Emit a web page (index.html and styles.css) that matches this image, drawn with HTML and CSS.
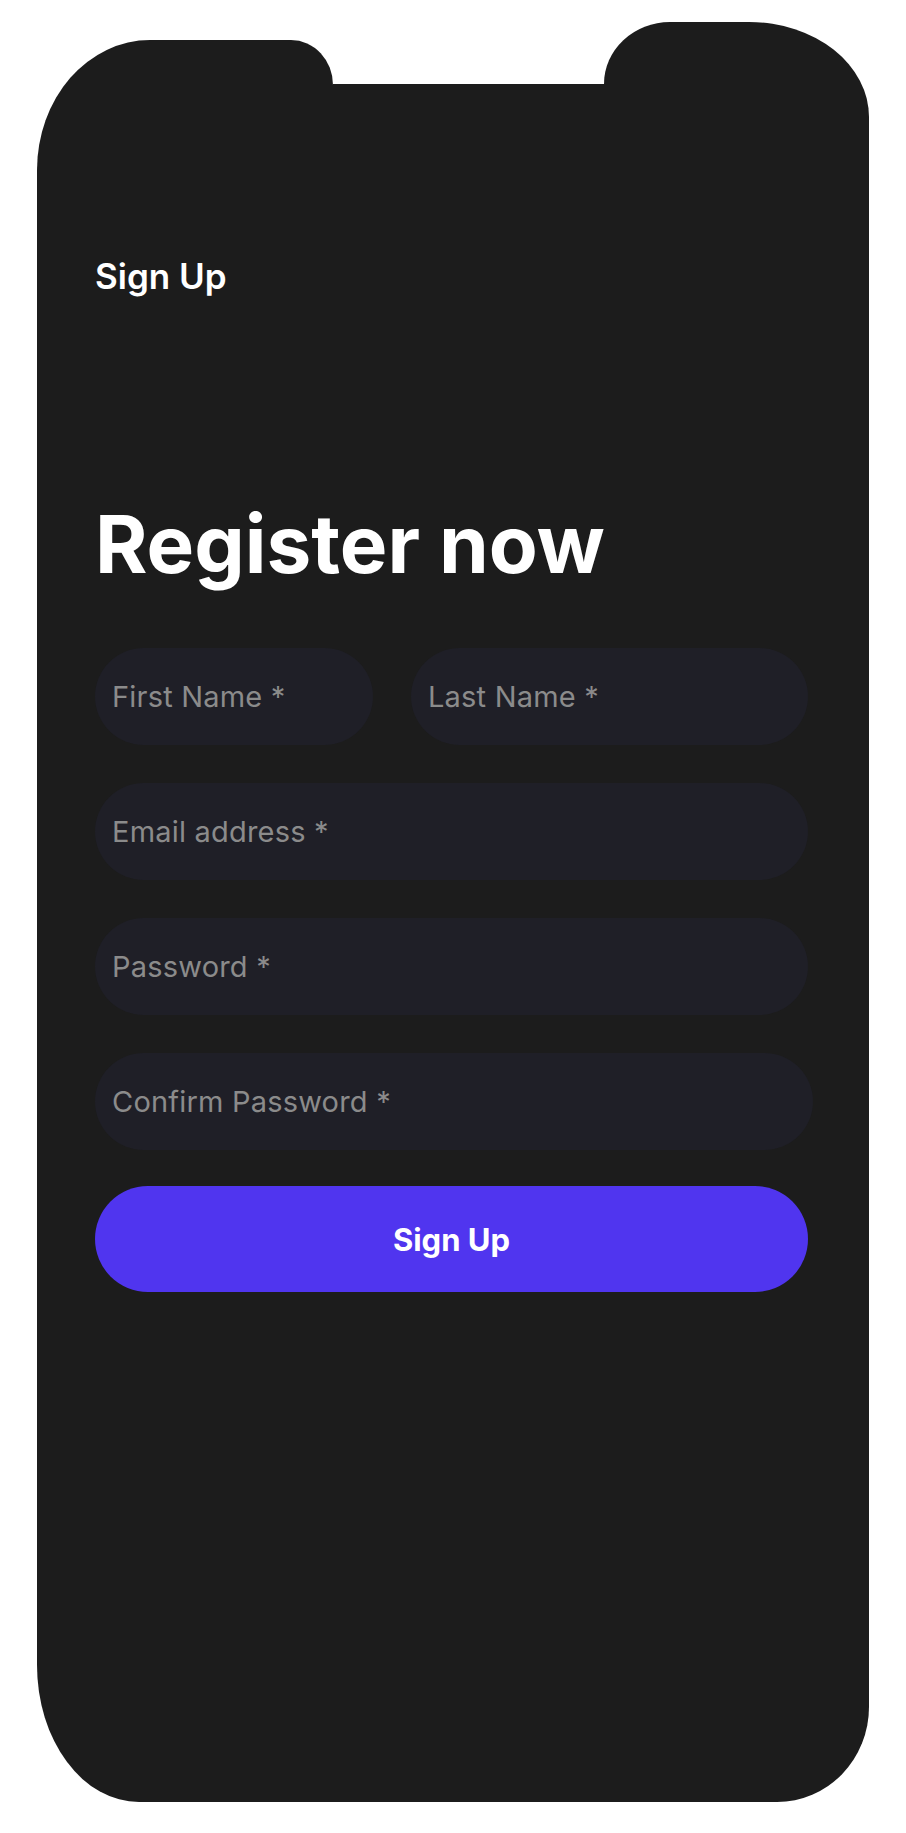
FILE: index.html
```html
<!DOCTYPE html>
<html lang="en">
<head>
<meta charset="utf-8">
<title>Sign Up</title>
<link rel="stylesheet" href="styles.css">
</head>
<body>
<div class="phone">
  <div class="cap-top">
    <div class="lobe lobe-left"></div>
    <div class="lobe lobe-mid"></div>
    <div class="lobe lobe-right"></div>
  </div>
  <main class="screen">
    <header class="topbar">Sign Up</header>
    <h1 class="title">Register now</h1>
    <form class="form">
      <div class="row">
        <input class="field field-first" type="text" placeholder="First Name *">
        <input class="field field-last" type="text" placeholder="Last Name *">
      </div>
      <input class="field" type="email" placeholder="Email address *">
      <input class="field" type="password" placeholder="Password *">
      <input class="field field-wide" type="password" placeholder="Confirm Password *">
      <button class="submit" type="button">Sign Up</button>
    </form>
  </main>
  <div class="cap-bottom"></div>
</div>
</body>
</html>
```

FILE: styles.css
```css
html, body {
  margin: 0;
  padding: 0;
  background: #ffffff;
}

body {
  font-family: Inter, "Noto Sans", sans-serif;
}

.phone {
  width: 832px;
  margin: 22px 0 0 37px;
}

.cap-top {
  display: flex;
  align-items: flex-end;
  height: 150px;
}

.lobe {
  background: #1c1c1c;
}

.lobe-left {
  width: 296px;
  height: 132px;
  border-radius: 113px 42px 0 0 / 130px 45px 0 0;
}

.lobe-mid {
  width: 271px;
  height: 88px;
}

.lobe-right {
  width: 265px;
  height: 150px;
  border-radius: 66px 120px 0 0 / 62px 95px 0 0;
}

.screen {
  box-sizing: border-box;
  height: 1480px;
  background: #1c1c1c;
  padding: 82px 0 0 58px;
}

.topbar {
  color: #ffffff;
  font-size: 35px;
  line-height: 44px;
  font-weight: 600;
}

.title {
  margin: 206px 0 0;
  color: #ffffff;
  font-size: 80px;
  line-height: 80px;
  font-weight: 700;
  letter-spacing: 0;
}

.form {
  display: flex;
  flex-direction: column;
  gap: 38px;
  margin-top: 64px;
  width: 713px;
}

.row {
  display: flex;
  gap: 38px;
}

.field {
  box-sizing: border-box;
  display: block;
  width: 713px;
  height: 97px;
  margin: 0;
  padding: 0 0 0 17px;
  border: none;
  border-radius: 49px;
  background: #1f1f27;
  color: #d0d0d0;
  font-family: Inter, "Noto Sans", sans-serif;
  font-size: 29px;
  letter-spacing: 0.2px;
  outline: none;
}

.field::placeholder {
  color: #8b8b8b;
  opacity: 1;
}

.field-first {
  width: 278px;
}

.field-last {
  width: 397px;
}

.field-wide {
  width: 718px;
}

.submit {
  display: block;
  width: 713px;
  height: 106px;
  margin: -2px 0 0;
  border: none;
  border-radius: 53px;
  background: #5035ef;
  color: #ffffff;
  font-family: Inter, "Noto Sans", sans-serif;
  font-size: 31px;
  font-weight: 700;
  cursor: pointer;
}

.cap-bottom {
  height: 150px;
  background: #1c1c1c;
  border-radius: 0 0 92px 102px / 0 0 95px 137px;
}
```
